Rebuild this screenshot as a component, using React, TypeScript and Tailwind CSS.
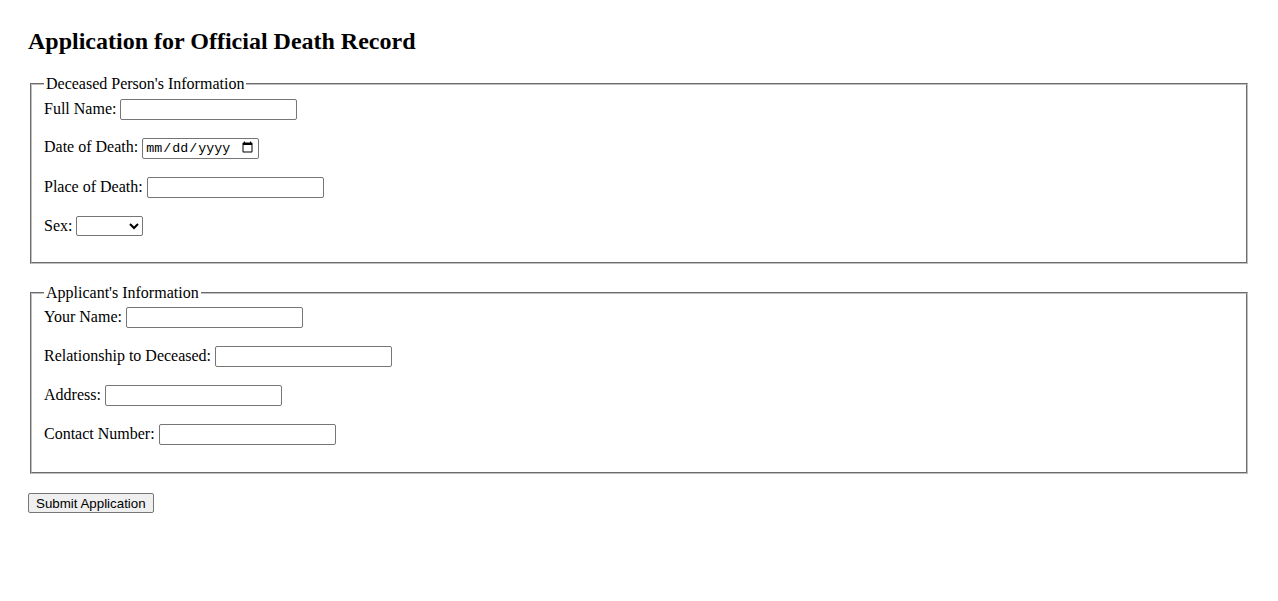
import React from "react";

const inputCls =
  "inline-block h-[21px] w-[177px] rounded-[2px] border border-[#767676] bg-white px-[2px] py-[1px] align-baseline font-['Liberation_Sans',Arial,sans-serif] text-[13.333px] leading-[normal]";

function Field({ label, type = "text", cls = inputCls }: { label: string; type?: string; cls?: string }) {
  return (
    <>
      <label>{label}</label> <input type={type} className={cls} />
      <br />
      <br />
    </>
  );
}

function Group({ title, children }: { title: string; children: React.ReactNode }) {
  return (
    <fieldset className="mx-[2px] mb-[19.5px] border-2 border-[#c0c0c0] [border-style:groove] px-[12px] pt-[5.6px] pb-[8.5px]">
      <legend className="px-[2px]">{title}</legend>
      {children}
    </fieldset>
  );
}

export default function App() {
  return (
    <div className="min-h-[601px] bg-white p-[28px] font-['Liberation_Serif','Times_New_Roman',serif] text-[16px] leading-[normal] text-black">
      <h2 className="mb-[19.92px] text-[24px] font-bold">Application for Official Death Record</h2>
      <form>
        <Group title="Deceased Person's Information">
          <Field label="Full Name:" />
          <Field
            label="Date of Death:"
            type="date"
            cls="inline-block h-[21px] w-[117px] rounded-[2px] border border-[#767676] bg-white px-[2px] py-[1px] align-baseline font-['Liberation_Mono',monospace] text-[13.333px] leading-[normal]"
          />
          <Field label="Place of Death:" />
          <label>Sex:</label>{" "}
          <select className="inline-block h-[20px] w-[67px] rounded-[2px] border border-[#767676] bg-white align-baseline font-['Liberation_Sans',Arial,sans-serif] text-[13.333px]">
            <option value=""></option>
            <option>Male</option>
            <option>Female</option>
          </select>
          <br />
          <br />
        </Group>
        <Group title="Applicant's Information">
          <Field label="Your Name:" />
          <Field label="Relationship to Deceased:" />
          <Field label="Address:" />
          <Field label="Contact Number:" />
        </Group>
        <button
          type="submit"
          className="h-[20px] rounded-[2px] border border-[#767676] bg-[#efefef] px-[7px] font-['Liberation_Sans',Arial,sans-serif] text-[13.333px] leading-[normal]"
        >
          Submit Application
        </button>
      </form>
    </div>
  );
}
